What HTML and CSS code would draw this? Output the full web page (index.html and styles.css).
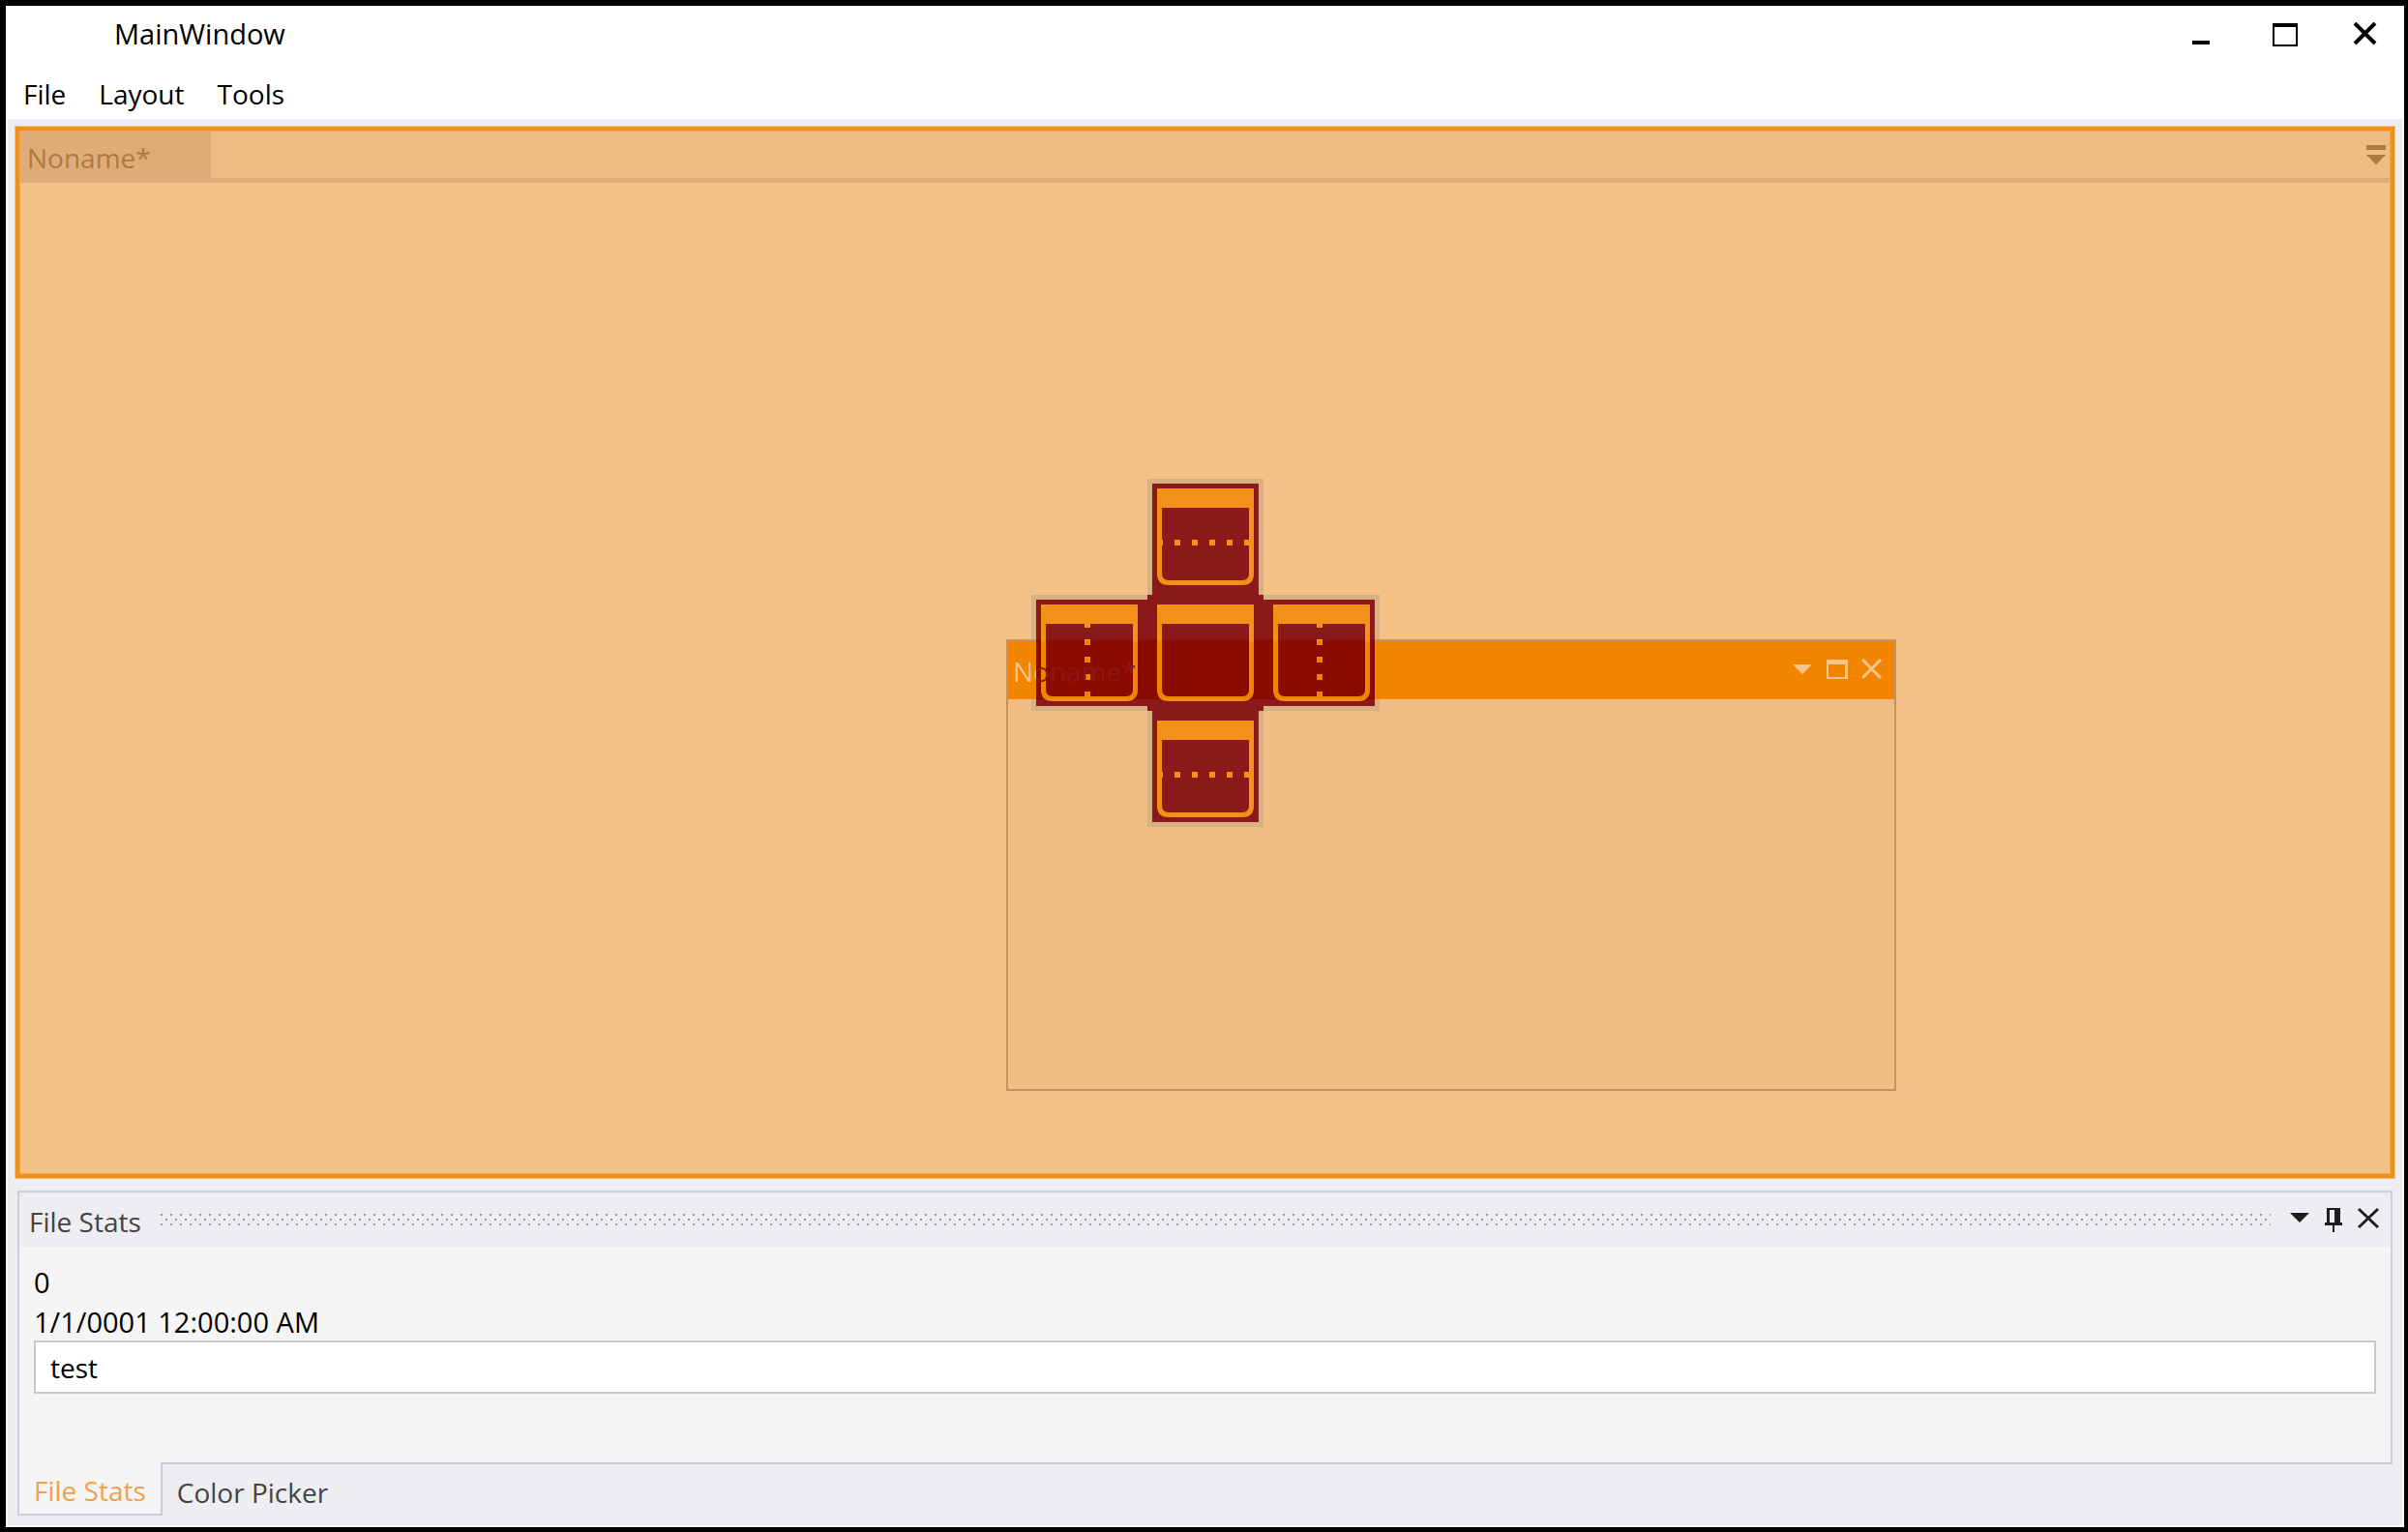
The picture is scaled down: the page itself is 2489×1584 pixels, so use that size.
FILE: index.html
```html
<!DOCTYPE html>
<html lang="en">
<head>
<meta charset="utf-8">
<title>MainWindow</title>
<link rel="stylesheet" href="styles.css">
</head>
<body>
<div class="window">
  <header class="titlebar">
    <h1 class="title">MainWindow</h1>
    <div class="caption-buttons">
      <button class="caption-button" aria-label="Minimize"><svg width="28" height="28"><path d="M0 19h18v4H0z"/></svg></button>
      <button class="caption-button" aria-label="Maximize"><svg width="28" height="28"><path fill-rule="evenodd" d="M1 1h26v24H1zM3 5v18h22V5z"/></svg></button>
      <button class="caption-button" aria-label="Close"><svg width="28" height="28"><path d="M4 1l21 21M25 1L4 22" stroke="#000" stroke-width="4"/></svg></button>
    </div>
  </header>
  <nav class="menu">
    <button class="menu-item">File</button>
    <button class="menu-item">Layout</button>
    <button class="menu-item">Tools</button>
  </nav>
  <main class="workspace">
    <section class="documents">
      <div class="document-tabs">
        <button class="document-tab">Noname*</button>
        <button class="icon-button" aria-label="Document list"><svg width="22" height="22"><path fill="#ad7b3f" d="M1 1h20v5H1zM1 11h20L11 21z"/></svg></button>
      </div>
      <div class="document-body"></div>

      <div class="floating">
        <div class="floating-header">
          <span class="floating-title">Noname*</span>
          <button class="icon-button" aria-label="Window menu"><svg width="22" height="22"><path fill="#fac58b" d="M1 6h20L11 16z"/></svg></button>
          <button class="icon-button" aria-label="Maximize pane"><svg width="22" height="22"><path fill="#fac58b" fill-rule="evenodd" d="M0 1h22v20H0zM2 6v13h17V6z"/></svg></button>
          <button class="icon-button" aria-label="Close pane"><svg width="22" height="22"><path stroke="#fac58b" stroke-width="3" d="M1 1l19 19M20 1L1 20"/></svg></button>
        </div>
      </div>

      <svg class="compass" width="360" height="360" viewBox="0 0 360 360" fill="none">
        <defs>
          <linearGradient id="base" gradientUnits="userSpaceOnUse" x1="0" y1="0" x2="0" y2="360">
            <stop offset="0" stop-color="#8a1919"/><stop offset=".4611" stop-color="#8a1919"/>
            <stop offset=".4611" stop-color="#7f1213"/><stop offset=".4667" stop-color="#7f1213"/>
            <stop offset=".4667" stop-color="#8b0b00"/><stop offset=".6333" stop-color="#8b0b00"/>
            <stop offset=".6333" stop-color="#8a1919"/><stop offset="1" stop-color="#8a1919"/>
          </linearGradient>
          <linearGradient id="accent" gradientUnits="userSpaceOnUse" x1="0" y1="0" x2="0" y2="360">
            <stop offset="0" stop-color="#f29019"/><stop offset=".4667" stop-color="#f29019"/>
            <stop offset=".4667" stop-color="#f28500"/><stop offset=".6333" stop-color="#f28500"/>
            <stop offset=".6333" stop-color="#f29019"/><stop offset="1" stop-color="#f29019"/>
          </linearGradient>
        </defs>
        <path fill="#d6b184" d="M120 0h120v120h120v46H0v-46h120zM0 228h360v12H240v120H120V240H0z"/>
        <path fill="url(#base)" d="M125 5h110v115h5v5h115v110H240v5h-5v115H125V240h-5v-5H5V125h115v-5h5z"/>
        <g fill="url(#accent)" fill-rule="evenodd">
          <path d="M130 10h100v88q0 12-12 12h-76q-12 0-12-12zM135 30v68q0 7 7 7h76q7 0 7-7V30z"/>
          <path d="M130 130h100v88q0 12-12 12h-76q-12 0-12-12zM135 150v68q0 7 7 7h76q7 0 7-7v-68z"/>
          <path d="M130 250h100v88q0 12-12 12h-76q-12 0-12-12zM135 270v68q0 7 7 7h76q7 0 7-7v-68z"/>
          <path d="M10 130h100v88q0 12-12 12H22q-12 0-12-12zM15 150v68q0 7 7 7h76q7 0 7-7v-68z"/>
          <path d="M250 130h100v88q0 12-12 12h-76q-12 0-12-12zM255 150v68q0 7 7 7h76q7 0 7-7v-68z"/>
          <path d="M134 63h2v6h-2zM148 63h6v6h-6zM166 63h6v6h-6zM184 63h6v6h-6zM202 63h6v6h-6zM220 63h6v6h-6z"/>
          <path d="M134 303h2v6h-2zM148 303h6v6h-6zM166 303h6v6h-6zM184 303h6v6h-6zM202 303h6v6h-6zM220 303h6v6h-6z"/>
          <path d="M55 149h6v5h-6zM55 166h6v6h-6zM55 184h6v6h-6zM55 202h6v6h-6zM55 220h6v6h-6z"/>
          <path d="M295 149h6v5h-6zM295 166h6v6h-6zM295 184h6v6h-6zM295 202h6v6h-6zM295 220h6v6h-6z"/>
        </g>
      </svg>
    </section>

    <section class="tool-pane">
      <div class="tool-panel">
        <header class="tool-header">
          <h2 class="tool-title">File Stats</h2>
          <svg class="grip" height="13" aria-hidden="true">
            <defs><pattern id="dots" width="10" height="13" patternUnits="userSpaceOnUse"><path fill="#999" d="M0 0h2v2H0zM5 5h2v2H5zM0 10h2v2H0z"/></pattern></defs>
            <rect width="100%" height="13" fill="url(#dots)"/>
          </svg>
          <div class="tool-buttons">
            <button class="icon-button" aria-label="Panel menu"><svg width="22" height="26"><path fill="#1e1e1e" d="M0 6h20L10 16z"/></svg></button>
            <button class="icon-button" aria-label="Pin panel"><svg width="22" height="26"><path fill="#1e1e1e" fill-rule="evenodd" d="M3 1h14v15h2v3h-8v7H9v-7H1v-3h2zM6 3v13h5V3z"/></svg></button>
            <button class="icon-button" aria-label="Close panel"><svg width="22" height="26"><path stroke="#1e1e1e" stroke-width="3" d="M1 2l20 19M21 2L1 21"/></svg></button>
          </div>
        </header>
        <div class="tool-content">
          <p class="stat">0</p>
          <p class="stat">1/1/0001 12:00:00 AM</p>
          <input class="text-box" type="text" value="test" aria-label="Text">
        </div>
      </div>
      <div class="tool-tabs">
        <button class="tool-tab tool-tab-active">File Stats</button>
        <button class="tool-tab">Color Picker</button>
      </div>
    </section>
  </main>
</div>
</body>
</html>
```
FILE: styles.css
```css
* { box-sizing: border-box; }

body {
  margin: 0;
  background: #000;
  color: #000;
  font: 28px/40px "Open Sans", "Noto Sans", sans-serif;
}

h1, h2, p { margin: 0; font: inherit; }

button {
  margin: 0;
  padding: 0;
  border: 0;
  background: none;
  color: inherit;
  font: inherit;
}

svg { display: block; }

.window {
  display: flex;
  flex-direction: column;
  min-height: 100vh;
  border: solid #000;
  border-width: 6px 4px 5px 6px;
  background: #fff;
}

.titlebar {
  display: flex;
  justify-content: space-between;
  height: 62px;
  padding: 9px 27px 0 112px;
}

.title { font-size: 29px; }

.caption-buttons {
  display: flex;
  gap: 54px;
  padding-top: 8px;
}

.caption-button { height: 28px; }

.menu {
  display: flex;
  gap: 34px;
  height: 55px;
  padding: 9px 18px 0;
}

.menu-item { height: 40px; }

.workspace {
  display: flex;
  flex: 1;
  flex-direction: column;
  gap: 12px;
  margin: 0 2px 2px;
  padding: 7px 7px 10px;
  background: #eeedf2;
}

.documents {
  position: relative;
  display: flex;
  flex: 1;
  flex-direction: column;
  padding: 1px;
  border: 5px solid #f0901c;
  outline: 1px solid #f4c187;
  outline-offset: -1px;
  background: #f2a74e;
}

.document-tabs {
  display: flex;
  align-items: center;
  justify-content: space-between;
  height: 53px;
  padding-right: 3px;
  border-bottom: 5px solid #dfac79;
  background: #efbc83;
}

.document-tab {
  align-self: stretch;
  width: 197px;
  height: 48px;
  padding: 6px 7px 0;
  background: #dfac79;
  color: #ad7b3f;
  text-align: left;
}

.document-body { flex: 1; background: #f4c186; }

.floating {
  position: absolute;
  top: 526px;
  left: 1020px;
  width: 920px;
  height: 467px;
  border: 2px solid #c59165;
  background: #efbc83;
}

.floating-header {
  display: flex;
  align-items: center;
  gap: 14px;
  height: 60px;
  padding: 0 12px 2px 5px;
  background: #f28500;
}

.floating-title {
  position: relative;
  z-index: 2;
  margin-right: auto;
  padding-top: 4px;
  background: linear-gradient(90deg, #fac58b 24px, #8a1919 24px);
  background-clip: text;
  color: transparent;
}

.compass {
  position: absolute;
  z-index: 1;
  top: 50%;
  left: 50%;
  margin: -180px 0 0 -180px;
}

.tool-pane { margin: 0 3px; }

.tool-panel {
  border: 2px solid #cccddd;
  background: #f5f5f5;
}

.tool-header {
  display: flex;
  align-items: center;
  gap: 20px;
  height: 56px;
  padding: 0 12px 0 10px;
  background: #eeedf2;
  color: #444;
}

.tool-title { padding-top: 4px; }

.grip { flex: 1; min-width: 0; }

.tool-buttons { display: flex; gap: 13px; }

.tool-content {
  height: 223px;
  padding: 16px 15px;
}

.stat {
  font-size: 29px;
  line-height: 41px;
}

.text-box {
  display: block;
  width: 100%;
  height: 55px;
  margin-top: -1px;
  padding: 0 15px;
  border: 2px solid #c8c8c8;
  background: #fff;
  color: #000;
  font: inherit;
}

.tool-tabs { display: flex; }

.tool-tab {
  height: 53px;
  padding: 4px 15px 0;
  color: #444;
}

.tool-tab-active {
  height: 55px;
  margin-top: -2px;
  border: solid #cccddd;
  border-width: 0 2px 2px;
  background: #f5f5f5;
  color: #f3a04b;
}
```
